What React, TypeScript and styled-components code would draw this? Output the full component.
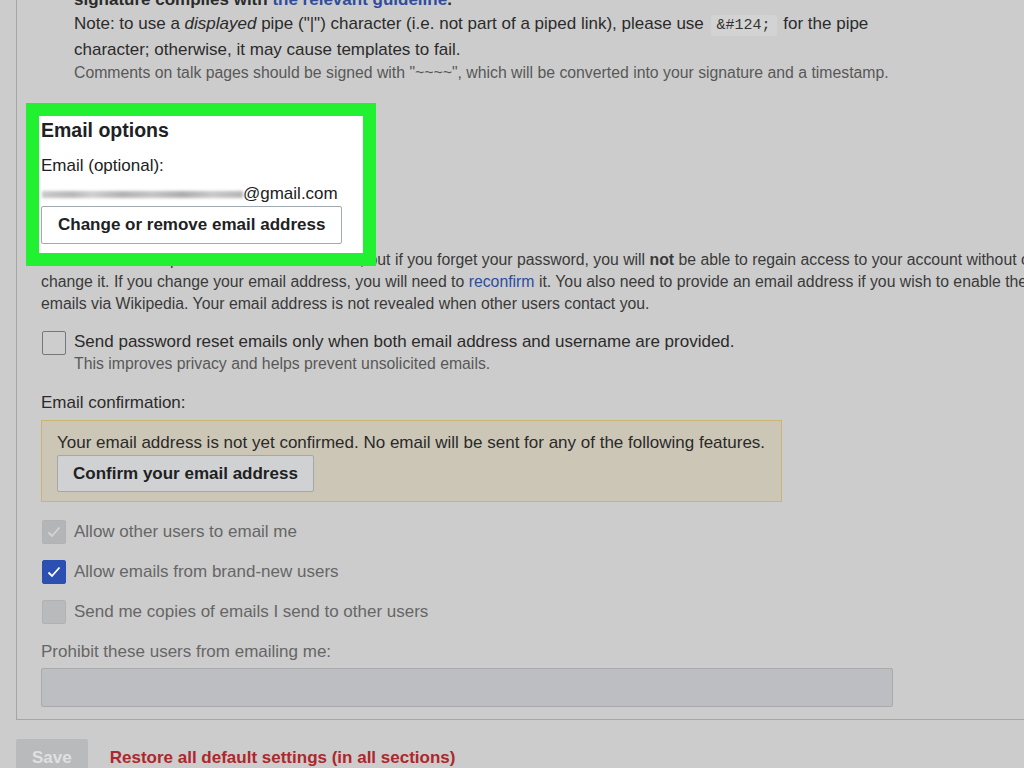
import styled, { createGlobalStyle } from "styled-components";

const GlobalStyle = createGlobalStyle`
  html, body {
    margin: 0;
    background: #cccccc;
    overflow: hidden;
  }
  body {
    font-family: "Liberation Sans", Arial, sans-serif;
    font-size: 17px;
    color: #2b2b2b;
  }
`;

const Page = styled.div`
  padding-left: 16px;
  width: 1200px;
`;

const Fieldset = styled.div`
  margin-top: -12px;
  border-left: 1px solid #a6a6a6;
  border-bottom: 1px solid #a6a6a6;
  padding: 0 0 12px 24px;
`;

const TopNote = styled.div`
  margin-left: 33px;
`;

const Line = styled.div`
  line-height: 24px;
  white-space: nowrap;
`;

const Strong = styled.span`
  font-weight: bold;
`;

const Link = styled.span<{ $bold?: boolean }>`
  color: #2f4d9c;
  font-weight: ${(p) => (p.$bold ? "bold" : "normal")};
`;

const Code = styled.span`
  font-family: "Liberation Mono", "Courier New", monospace;
  font-size: 15px;
  background: #d3d3d3;
  padding: 2px 6px;
  margin: 0 2px;
  border-radius: 2px;
  color: #333;
`;

const Help = styled.div`
  font-size: 15.8px;
  line-height: 22px;
  color: #585858;
  white-space: nowrap;
`;

const Highlight = styled.div`
  position: relative;
  z-index: 1;
  box-sizing: border-box;
  width: 324px;
  margin: 32px 0 0 -2px;
  padding: 1px 0 9px 2px;
  background: #ffffff;
  outline: 13px solid #21f130;
  color: #202122;
`;

const Heading = styled.div`
  font-size: 19.5px;
  font-weight: bold;
  line-height: 26px;
`;

const FieldLabel = styled.div<{ $gap: number; $muted?: boolean }>`
  margin-top: ${(p) => p.$gap}px;
  line-height: 24px;
  color: ${(p) => (p.$muted ? "#666" : "inherit")};
  white-space: nowrap;
`;

const Blurred = styled.span`
  display: inline-block;
  width: 201px;
  height: 7px;
  margin-left: 1px;
  vertical-align: 1px;
  background: linear-gradient(
    90deg,
    #c9c9c9 0%,
    #b8b8b8 15%,
    #cfcfcf 25%,
    #b2b2b2 40%,
    #c4c4c4 55%,
    #adadad 70%,
    #c8c8c8 85%,
    #b5b5b5 100%
  );
  filter: blur(1.5px);
`;

const Button = styled.button<{ $tone: "white" | "grey" }>`
  display: block;
  height: ${(p) => (p.$tone === "white" ? 38 : 37)}px;
  padding: 0 ${(p) => (p.$tone === "white" ? 16 : 15)}px;
  border: 1px solid ${(p) => (p.$tone === "white" ? "#a2a9b1" : "#a5a6a8")};
  border-radius: 2px;
  background: ${(p) => (p.$tone === "white" ? "#ffffff" : "#d0d1d3")};
  font-family: inherit;
  font-size: 17px;
  font-weight: bold;
  color: #202122;
`;

const Paragraph = styled.div`
  margin-top: -4px;
  font-size: 15.8px;
  line-height: 22px;
  color: #3a3a3a;
  white-space: nowrap;
`;

const CheckRow = styled.div<{ $gap: number; $top?: boolean }>`
  display: flex;
  align-items: ${(p) => (p.$top ? "flex-start" : "center")};
  gap: 8px;
  margin-top: ${(p) => p.$gap}px;
  padding-left: 1px;
`;

type BoxKind = "empty" | "lockedOn" | "on" | "lockedOff";

const Box = styled.span<{ $kind: BoxKind }>`
  flex: none;
  box-sizing: border-box;
  width: 24px;
  height: 24px;
  margin-top: ${(p) => (p.$kind === "empty" ? 1 : 0)}px;
  border-radius: 2px;
  border: 1px solid
    ${(p) =>
      p.$kind === "empty"
        ? "#76777a"
        : p.$kind === "on"
        ? "#2b4fb0"
        : "#b1b2b4"};
  background: ${(p) =>
    p.$kind === "empty"
      ? "#cdcdcd"
      : p.$kind === "on"
      ? "#2c50b2"
      : p.$kind === "lockedOn"
      ? "#b4b5b7"
      : "#b9babc"};
  display: flex;
  align-items: center;
  justify-content: center;
`;

const CheckText = styled.div<{ $muted?: boolean }>`
  line-height: 24px;
  white-space: nowrap;
  color: ${(p) => (p.$muted ? "#666" : "#2b2b2b")};
`;

const CheckHelp = styled(Help)`
  margin-top: -1px;
`;

const Warning = styled.div`
  width: fit-content;
  margin-top: 5px;
  padding: 10px 16px 9px 15px;
  border: 1px solid #c9b571;
  background: #ccc6b7;
  color: #2a2a2a;
`;

const WarnText = styled.div`
  line-height: 24px;
  white-space: nowrap;
`;

const TextInput = styled.div`
  box-sizing: border-box;
  width: 852px;
  height: 39px;
  margin-top: 4px;
  border: 1px solid #a9aaac;
  border-radius: 2px;
  background: #bdbec1;
`;

const Footer = styled.div`
  display: flex;
  align-items: center;
  gap: 22px;
  margin-top: 19px;
`;

const SaveButton = styled.button`
  height: 38px;
  padding: 0 16px;
  border: none;
  border-radius: 2px;
  background: #b9babc;
  color: #e0e0e0;
  font-family: inherit;
  font-size: 17px;
  font-weight: bold;
`;

const Restore = styled.span`
  color: #ad272d;
  font-weight: bold;
`;

function Check({ kind }: { kind: BoxKind }) {
  const stroke = kind === "on" ? "#ffffff" : kind === "lockedOn" ? "#d4d4d6" : "";
  return (
    <Box $kind={kind}>
      {stroke && (
        <svg width="18" height="18" viewBox="0 0 18 18">
          <polyline
            points="3.5,9.5 7,13 14.5,4.5"
            fill="none"
            stroke={stroke}
            strokeWidth="1.8"
          />
        </svg>
      )}
    </Box>
  );
}

export default function App() {
  return (
    <>
      <GlobalStyle />
      <Page>
        <Fieldset>
          <TopNote>
            <Line>
              <Strong>
                signature complies with <Link $bold>the relevant guideline</Link>.
              </Strong>
            </Line>
            <Line>
              Note: to use a <i>displayed</i> pipe ("|") character (i.e. not part of a
              piped link), please use <Code>{"&#124;"}</Code> for the pipe
            </Line>
            <Line>character; otherwise, it may cause templates to fail.</Line>
            <Help>
              Comments on talk pages should be signed with "~~~~", which will be
              converted into your signature and a timestamp.
            </Help>
          </TopNote>

          <Highlight>
            <Heading>Email options</Heading>
            <FieldLabel $gap={11}>Email (optional):</FieldLabel>
            <FieldLabel $gap={4}>
              <Blurred />
              @gmail.com
            </FieldLabel>
            <Button $tone="white">Change or remove email address</Button>
          </Highlight>

          <Paragraph>
            <div>
              Email address is optional and not shown here, but if you forget your
              password, you will <Strong>not</Strong> be able to regain access to your
              account without one. Only you can
            </div>
            <div>
              change it. If you change your email address, you will need to{" "}
              <Link>reconfirm</Link> it. You also need to provide an email address if
              you wish to enable the sending of
            </div>
            <div>
              emails via Wikipedia. Your email address is not revealed when other users
              contact you.
            </div>
          </Paragraph>

          <CheckRow $gap={15} $top>
            <Check kind="empty" />
            <div>
              <CheckText>
                Send password reset emails only when both email address and username are
                provided.
              </CheckText>
              <CheckHelp>This improves privacy and helps prevent unsolicited emails.</CheckHelp>
            </div>
          </CheckRow>

          <FieldLabel $gap={16}>Email confirmation:</FieldLabel>
          <Warning>
            <WarnText>
              Your email address is not yet confirmed. No email will be sent for any of
              the following features.
            </WarnText>
            <Button $tone="grey">Confirm your email address</Button>
          </Warning>

          <CheckRow $gap={18}>
            <Check kind="lockedOn" />
            <CheckText $muted>Allow other users to email me</CheckText>
          </CheckRow>
          <CheckRow $gap={16}>
            <Check kind="on" />
            <CheckText $muted>Allow emails from brand-new users</CheckText>
          </CheckRow>
          <CheckRow $gap={16}>
            <Check kind="lockedOff" />
            <CheckText $muted>Send me copies of emails I send to other users</CheckText>
          </CheckRow>

          <FieldLabel $gap={16} $muted>
            Prohibit these users from emailing me:
          </FieldLabel>
          <TextInput />
        </Fieldset>

        <Footer>
          <SaveButton>Save</SaveButton>
          <Restore>Restore all default settings (in all sections)</Restore>
        </Footer>
      </Page>
    </>
  );
}
